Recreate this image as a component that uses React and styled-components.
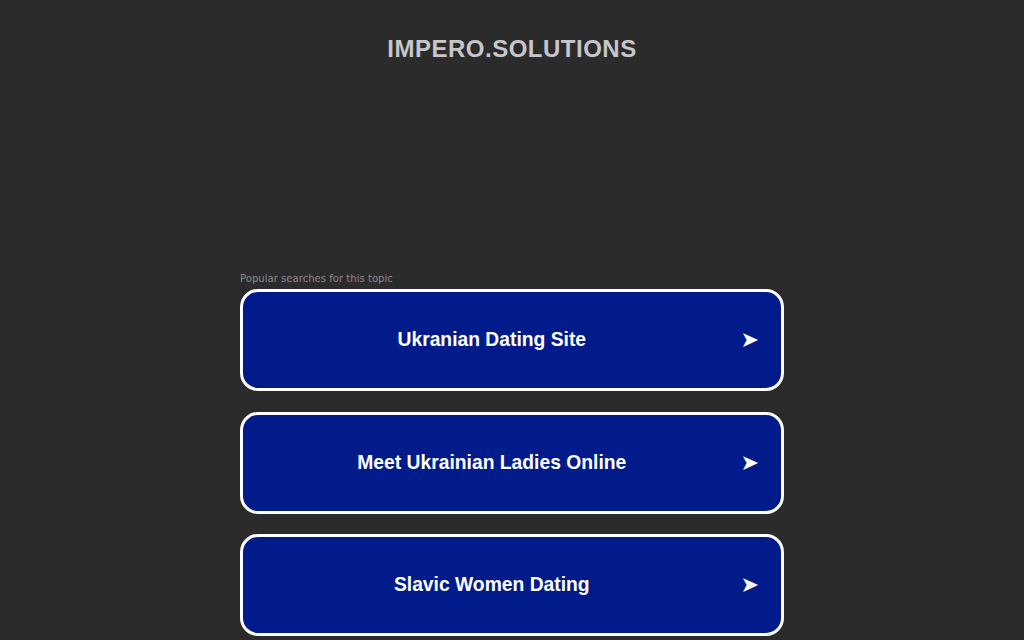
import React from "react";
import styled, { createGlobalStyle } from "styled-components";

const GlobalStyle = createGlobalStyle`
  html, body {
    margin: 0;
    padding: 0;
    background-color: #2b2b2b;
  }
  body {
    font-family: "Liberation Sans", Arial, sans-serif;
  }
`;

const Page = styled.div`
  display: flex;
  flex-direction: column;
  align-items: center;
  min-height: 640px;
  background-color: #2b2b2b;
`;

const Title = styled.h1`
  margin: 35px 0 0 0;
  font-size: 24px;
  line-height: 28px;
  font-weight: bold;
  letter-spacing: 0.5px;
  color: #c6c6cc;
`;

const Searches = styled.div`
  width: 544px;
  margin-top: 209px;
  display: flex;
  flex-direction: column;
`;

const Caption = styled.p`
  margin: 0 0 4px 0;
  font-family: "DejaVu Sans", sans-serif;
  font-size: 10.1px;
  line-height: 13px;
  color: #8a8a8a;
`;

const List = styled.div`
  display: flex;
  flex-direction: column;
  gap: 20.5px;
`;

const SearchLink = styled.a`
  display: flex;
  align-items: center;
  height: 96px;
  border: 3px solid #ffffff;
  border-radius: 18px;
  background-color: #011b8b;
  color: #ffffff;
  text-decoration: none;
  cursor: pointer;
`;

const Label = styled.span`
  flex: 1;
  text-align: center;
  font-size: 19.3px;
  font-weight: bold;
`;

const Arrow = styled.span`
  margin-right: 22px;
  font-family: "DejaVu Sans", sans-serif;
  font-size: 22px;
  line-height: 1;
`;

const items = [
  "Ukranian Dating Site",
  "Meet Ukrainian Ladies Online",
  "Slavic Women Dating",
];

export default function App() {
  return (
    <>
      <GlobalStyle />
      <Page>
        <Title>IMPERO.SOLUTIONS</Title>
        <Searches>
          <Caption>Popular searches for this topic</Caption>
          <List>
            {items.map((item) => (
              <SearchLink key={item}>
                <Label>{item}</Label>
                <Arrow>➤</Arrow>
              </SearchLink>
            ))}
          </List>
        </Searches>
      </Page>
    </>
  );
}
